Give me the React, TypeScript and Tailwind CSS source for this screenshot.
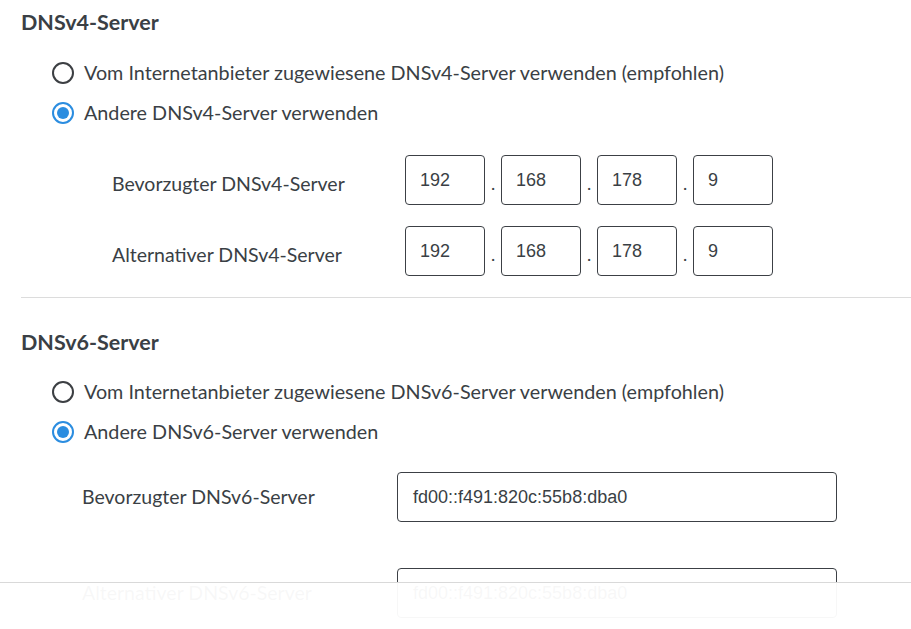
import React from "react"

const textFont = { fontFamily: "Lato, 'Open Sans', sans-serif" }

function Radio({ checked, label }: { checked?: boolean; label: string }) {
    return (
        <label className="flex items-center h-[40px] gap-[10px] cursor-pointer">
            {checked ? (
                <span className="w-[22px] h-[22px] rounded-full border-2 border-[#2b8de0] flex items-center justify-center">
                    <span className="w-[12px] h-[12px] rounded-full bg-[#2b8de0]" />
                </span>
            ) : (
                <span className="w-[22px] h-[22px] rounded-full border-2 border-[#3c3f43]" />
            )}
            <span className="text-[19.75px] text-[#3a3f45]">{label}</span>
        </label>
    )
}

function Field({ value, className }: { value: string; className: string }) {
    return (
        <div
            className={`shrink-0 h-[50px] border border-[#3c4045] rounded-[4px] flex items-center text-[18px] text-[#3a3f45] ${className}`}
            style={{ fontFamily: "'Liberation Sans', Arial, sans-serif" }}
        >
            {value}
        </div>
    )
}

function Ipv4Row({ label, parts }: { label: string; parts: string[] }) {
    return (
        <div className="flex items-center h-[50px]">
            <div className="shrink-0 w-[384px] pl-[91px] pt-[7px] text-[19.5px] text-[#3a3f45]">{label}</div>
            <div className="flex items-center">
                {parts.map((p, i) => (
                    <React.Fragment key={i}>
                        {i > 0 && <span className="w-[16px] text-center text-[18px] text-[#3a3f45] pt-[6px]">.</span>}
                        <Field value={p} className="w-[80px] px-[14px]" />
                    </React.Fragment>
                ))}
            </div>
        </div>
    )
}

function Ipv6Row({ label, value }: { label: string; value: string }) {
    return (
        <div className="flex items-center">
            <div className="shrink-0 w-[376px] pl-[61px] text-[19.5px] text-[#3a3f45]">{label}</div>
            <Field value={value} className="w-[440px] px-[15px]" />
        </div>
    )
}

export default function App() {
    const ip = ["192", "168", "178", "9"]
    return (
        <div className="relative w-[911px] h-[629px] overflow-hidden bg-white" style={textFont}>
            <div className="pl-[21px]">
                <h2 className="h-[44px] flex items-center text-[21.5px] font-bold text-[#3a3f45]">DNSv4-Server</h2>
                <div className="pl-[31px] pt-[9px]">
                    <Radio label="Vom Internetanbieter zugewiesene DNSv4-Server verwenden (empfohlen)" />
                    <Radio checked label="Andere DNSv4-Server verwenden" />
                </div>
                <div className="pt-[22px] flex flex-col gap-[21px]">
                    <Ipv4Row label="Bevorzugter DNSv4-Server" parts={ip} />
                    <Ipv4Row label="Alternativer DNSv4-Server" parts={ip} />
                </div>
                <div className="mt-[21px] border-t border-[#dcdcdc]" />
                <h2 className="mt-[22px] h-[44px] flex items-center text-[21.5px] font-bold text-[#3a3f45]">DNSv6-Server</h2>
                <div className="pl-[31px] pt-[8px]">
                    <Radio label="Vom Internetanbieter zugewiesene DNSv6-Server verwenden (empfohlen)" />
                    <Radio checked label="Andere DNSv6-Server verwenden" />
                </div>
                <div className="pt-[20px] flex flex-col gap-[46px]">
                    <Ipv6Row label="Bevorzugter DNSv6-Server" value="fd00::f491:820c:55b8:dba0" />
                    <Ipv6Row label="Alternativer DNSv6-Server" value="fd00::f491:820c:55b8:dba0" />
                </div>
            </div>
            <div className="absolute left-0 right-0 top-[582px] bottom-0 bg-white/[0.96] border-t border-[#d9d9d9]" />
        </div>
    )
}
